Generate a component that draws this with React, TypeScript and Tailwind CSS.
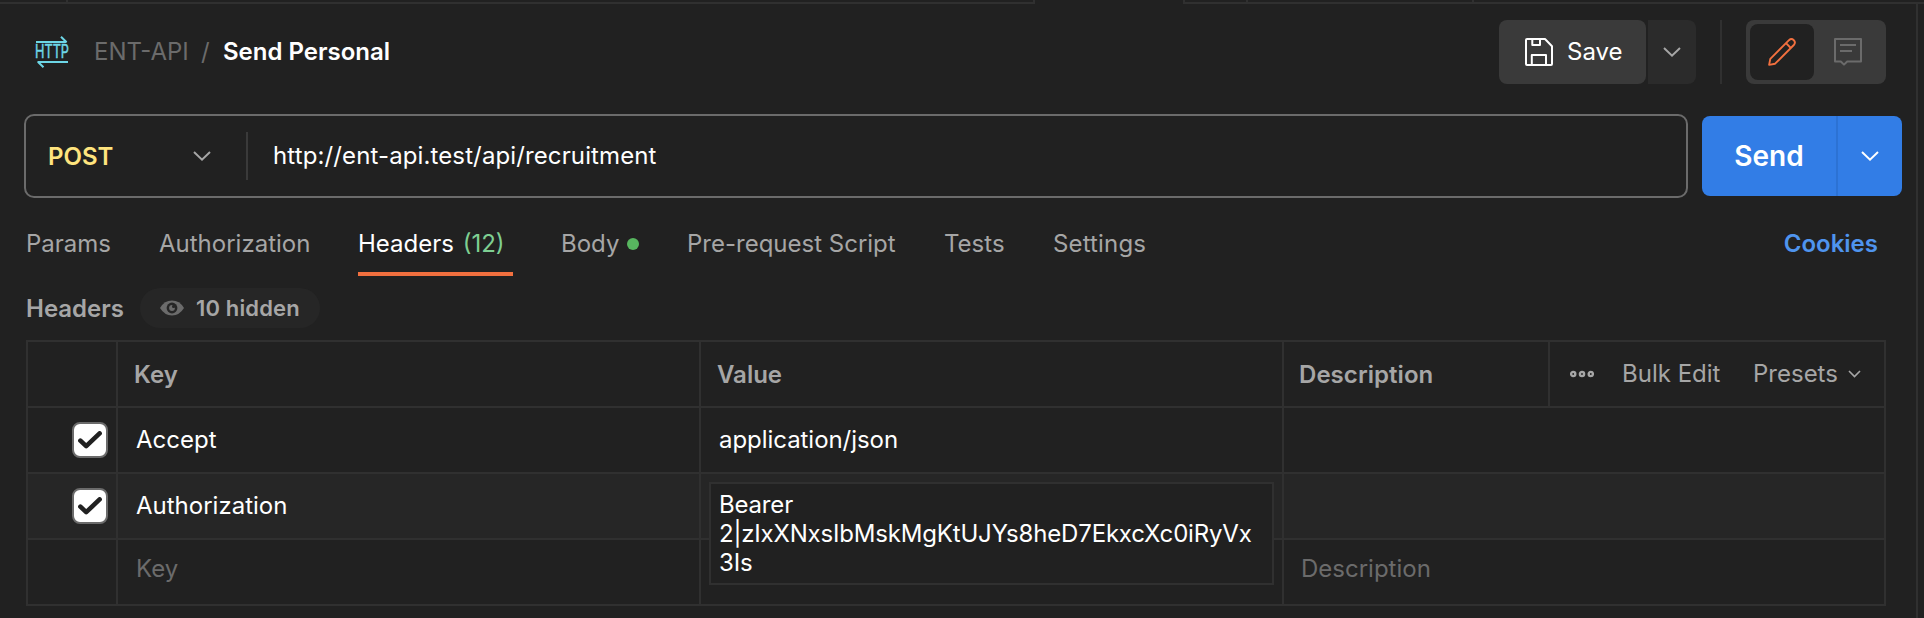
import React from "react";

function Chevron({ className, w = 18, h = 10, sw = 2 }: { className?: string; w?: number; h?: number; sw?: number }) {
  return (
    <svg width={w} height={h} viewBox={`0 0 ${w} ${h}`} fill="none" stroke="currentColor" strokeWidth={sw} className={className}>
      <path d={`M1 1 L${w / 2} ${h - 1.4} L${w - 1} 1`} />
    </svg>
  );
}

function HttpIcon() {
  return (
    <svg width="36" height="32" viewBox="-2 0 36 32" fill="none" stroke="#6dd6e6" strokeWidth="2" className="-ml-0.5 overflow-visible">
      <path d="M0 6 H30.5 M25 0.8 L30.6 6.2" />
      <path d="M32 26 H1.5 M7.5 31.2 L1.8 25.8" />
      <text x="-1" y="22.4" fontSize="18" textLength="34" lengthAdjust="spacingAndGlyphs" fill="#6dd6e6" strokeWidth="0.5" className="font-['Inter',sans-serif]">
        HTTP
      </text>
    </svg>
  );
}

function SaveIcon() {
  return (
    <svg width="28" height="28" viewBox="0 0 28 28" fill="none" stroke="#fff" strokeWidth="2" strokeLinejoin="round">
      <path d="M2 1 H20 L27 8.3 V26 Q27 27 26 27 H2 Q1 27 1 26 V2 Q1 1 2 1 Z" />
      <path d="M7.3 1 V7 H15 V1" />
      <path d="M6.8 27 V17 H21 V27" />
    </svg>
  );
}

function PencilIcon() {
  return (
    <svg width="28" height="28" viewBox="0 0 28 28" fill="none" stroke="#f2703f" strokeWidth="1.9" strokeLinejoin="round">
      <path d="M1.1 26.9 L2.3 20.9 L21 2.2 Q23.4 0 25.8 2.2 Q28 4.6 25.8 7 L7.1 25.7 Z" />
      <path d="M18 5.2 L22.8 10" />
    </svg>
  );
}

function CommentIcon() {
  return (
    <svg width="28" height="28" viewBox="0 0 28 28" fill="none" stroke="#6b6b6b" strokeWidth="2" strokeLinejoin="round">
      <path d="M1 1 H27 V23.5 H13.2 L10 26.6 L6.8 23.5 H1 Z" />
      <path d="M6 7 H22 M6 13 H18" />
    </svg>
  );
}

function EyeIcon() {
  return (
    <svg width="24" height="16" viewBox="0 0 24 16">
      <path d="M0 8 Q4.5 0.6 12 0.6 Q19.5 0.6 24 8 Q19.5 15.4 12 15.4 Q4.5 15.4 0 8 Z" fill="#6b6b6b" />
      <circle cx="12" cy="8" r="5.4" fill="#262626" />
      <circle cx="12" cy="8" r="2.9" fill="#6b6b6b" />
      <circle cx="13.6" cy="6.4" r="1.6" fill="#262626" />
    </svg>
  );
}

function Checkbox() {
  return (
    <span className="flex h-9 w-9 items-center justify-center rounded-lg border-2 border-[#6b6b6b] bg-white">
      <svg width="24" height="18" viewBox="0 0 24 18" fill="none" stroke="#212121" strokeWidth="4.6" strokeLinecap="round" strokeLinejoin="round">
        <path d="M2.4 9.6 L8.2 15.2 L21.6 2.4" />
      </svg>
    </span>
  );
}

const line = "border-[#303030]";

function TabStrip() {
  return (
    <div className="flex h-1 shrink-0">
      <div className={`w-[68px] border-r-2 border-b-2 ${line}`} />
      <div className={`w-[967px] border-r-2 border-b-2 ${line}`} />
      <div className="w-[148px]" />
      <div className={`w-[65px] border-x-2 border-b-2 ${line}`} />
      <div className={`w-[226px] border-r-2 border-b-2 ${line}`} />
      <div className={`flex-1 border-b-2 ${line}`} />
    </div>
  );
}

function TitleBar() {
  return (
    <div className="flex h-16 items-center pl-9 pr-[30px]">
      <HttpIcon />
      <span className="ml-6 w-[107px] text-[#6b6b6b]">ENT-API</span>
      <span className="w-[22px] text-[#6b6b6b]">/</span>
      <span className="font-semibold text-white">Send Personal</span>
      <div className="ml-auto flex h-16">
        <button className="flex w-[147px] items-center rounded-lg bg-[#3a3a3a] pl-[26px] text-white">
          <SaveIcon />
          <span className="ml-[14px]">Save</span>
        </button>
        <button className="ml-0.5 flex w-12 items-center justify-center rounded-r-lg bg-[#2b2b2b] text-[#a6a6a6]">
          <Chevron />
        </button>
        <div className="ml-6 w-0.5 bg-[#303030]" />
        <div className="ml-6 flex w-[140px] rounded-lg bg-[#3a3a3a] p-1">
          <span className="flex w-16 items-center justify-center rounded-lg bg-[#212121]">
            <PencilIcon />
          </span>
          <span className="flex flex-1 items-center justify-center">
            <CommentIcon />
          </span>
        </div>
      </div>
    </div>
  );
}

function UrlBar() {
  return (
    <div className="mt-[30px] flex items-center pl-6 pr-[14px]">
      <div className="flex h-[84px] w-[1664px] items-center rounded-[10px] border-2 border-[#6b6b6b] pl-[22px]">
        <span className="w-[145px] pt-0.5 font-semibold text-[#ffe47e]">POST</span>
        <Chevron className="text-[#a6a6a6]" />
        <div className="ml-[35px] h-12 w-0.5 bg-[#3a3a3a]" />
        <span className="ml-[25px] tracking-[0.12px] text-white">http://ent-api.test/api/recruitment</span>
      </div>
      <div className="ml-[14px] flex h-20 w-[200px] rounded-lg bg-[#327de6] text-white">
        <span className="flex w-[134px] items-center justify-center text-[28px] font-semibold">Send</span>
        <span className="flex flex-1 items-center justify-center border-l-2 border-[#2c72d4]">
          <Chevron />
        </span>
      </div>
    </div>
  );
}

function Tabs() {
  return (
    <div className="mt-[14px] flex h-16 gap-12 pl-[26px] pr-[38px] leading-[64px] whitespace-nowrap text-[#a6a6a6]">
      <span className="w-[84px]">Params</span>
      <span className="w-[152px] pl-px">Authorization</span>
      <span className="h-16 w-[155px] border-b-4 border-[#f2703f] text-white">
        Headers <span className="ml-0.5 text-[#7ecf92]">(12)</span>
      </span>
      <span className="flex w-[78px] items-center justify-between">
        Body <i className="h-3 w-3 rounded-full bg-[#57b65f]" />
      </span>
      <span className="w-[209px]">Pre-request Script</span>
      <span className="w-[60px]">Tests</span>
      <span className="pl-px tracking-[0.15px]">Settings</span>
      <span className="ml-auto font-semibold text-[#4f94ee]">Cookies</span>
    </div>
  );
}

function HeadersLabel() {
  return (
    <div className="mt-3 flex h-10 items-center pl-[26px] font-semibold text-[#a6a6a6]">
      <span className="w-[114px] pt-0.5">Headers</span>
      <span className="flex h-10 w-[180px] items-center rounded-full bg-[#262626] pl-5 text-[22px]">
        <EyeIcon />
        <span className="ml-3 tracking-[0.15px]">10 hidden</span>
      </span>
    </div>
  );
}

const cols = "grid grid-cols-[90px_583px_583px_602px]";
const cell = `flex items-center border-r-2 ${line}`;

function HeaderTable() {
  return (
    <div className={`mt-3 ml-[26px] w-[1860px] border-t-2 border-l-2 ${line}`}>
      <div className={`${cols} h-[66px] border-b-2 ${line} font-semibold text-[#a6a6a6]`}>
        <div className={cell} />
        <div className={`${cell} pl-4 pt-0.5`}>Key</div>
        <div className={`${cell} pl-4 pt-0.5`}>Value</div>
        <div className={cell}>
          <div className={`flex h-full w-[266px] items-center border-r-2 ${line} pl-[15px] pt-0.5 tracking-[0.05px]`}>Description</div>
          <div className="flex items-center pl-5 font-normal">
            <svg width="24" height="8" viewBox="0 0 24 8" fill="none" stroke="currentColor" strokeWidth="2.4">
              <circle cx="3.2" cy="4" r="2.1" />
              <circle cx="12" cy="4" r="2.1" />
              <circle cx="20.8" cy="4" r="2.1" />
            </svg>
            <span className="ml-7 w-[131px]">Bulk Edit</span>
            <span className="w-[95px]">Presets</span>
            <Chevron w={13} h={8} sw={1.6} />
          </div>
        </div>
      </div>

      <div className={`${cols} h-[66px] border-b-2 ${line} text-white`}>
        <div className={`${cell} justify-end pr-2`}>
          <Checkbox />
        </div>
        <div className={`${cell} pl-[18px]`}>Accept</div>
        <div className={`${cell} pl-[18px] tracking-[-0.05px]`}>application/json</div>
        <div className={cell} />
      </div>

      <div className={`${cols} h-[66px] border-b-2 ${line} bg-[#262626] text-white`}>
        <div className={`${cell} justify-end pr-2`}>
          <Checkbox />
        </div>
        <div className={`${cell} pl-[18px]`}>Authorization</div>
        <div className={`${cell} relative`}>
          <div className={`absolute top-2 left-2 z-10 h-[103px] w-[565px] border-2 ${line} bg-[#212121] pt-1.5 pl-2 leading-[29px] tracking-[-0.18px]`}>
            Bearer
            <br />
            2|zIxXNxsIbMskMgKtUJYs8heD7EkxcXc0iRyVx
            <br />
            3Is
          </div>
        </div>
        <div className={cell} />
      </div>

      <div className={`${cols} h-[66px] border-b-2 ${line} text-[#6b6b6b]`}>
        <div className={cell} />
        <div className={`${cell} pl-[18px] pb-1.5`}>Key</div>
        <div className={cell} />
        <div className={`${cell} pl-[17px] pb-1.5`}>Description</div>
      </div>
    </div>
  );
}

export default function App() {
  return (
    <div className="flex h-[618px] w-[1924px] flex-col overflow-hidden bg-[#212121] font-['Inter',sans-serif] text-[24px] leading-[32px] antialiased">
      <TabStrip />
      <div className="flex min-h-0 flex-1">
        <div className={`w-[1918px] border-r-2 ${line} pt-4`}>
          <TitleBar />
          <UrlBar />
          <Tabs />
          <HeadersLabel />
          <HeaderTable />
        </div>
      </div>
    </div>
  );
}
